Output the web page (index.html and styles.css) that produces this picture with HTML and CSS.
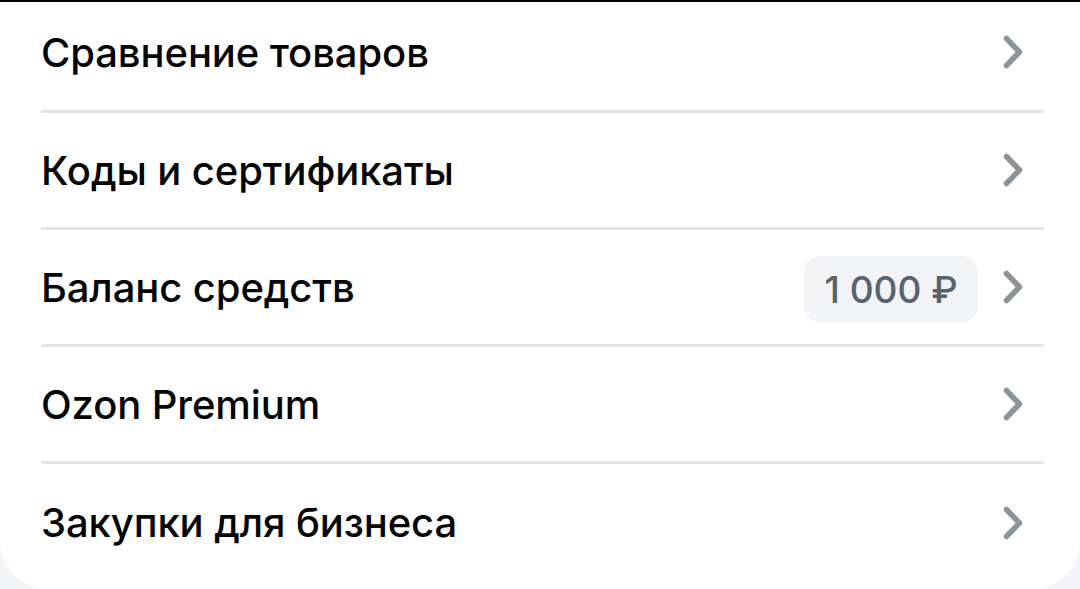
FILE: index.html
```html
<!DOCTYPE html>
<html lang="ru">
<head>
<meta charset="utf-8">
<link rel="stylesheet" href="styles.css">
</head>
<body>
<div class="page">
  <div class="topline"></div>
  <div class="card">
    <div class="row first">
      <span class="label">Сравнение товаров</span>
      <svg class="chev" viewBox="0 0 20 34" width="20" height="34"><path d="M3.5 3.5 L16.5 17 L3.5 30.5"/></svg>
    </div>
    <div class="row">
      <span class="label">Коды и сертификаты</span>
      <svg class="chev" viewBox="0 0 20 34" width="20" height="34"><path d="M3.5 3.5 L16.5 17 L3.5 30.5"/></svg>
    </div>
    <div class="row">
      <span class="label">Баланс средств</span>
      <span class="badge">1 000 ₽</span>
      <svg class="chev" viewBox="0 0 20 34" width="20" height="34"><path d="M3.5 3.5 L16.5 17 L3.5 30.5"/></svg>
    </div>
    <div class="row">
      <span class="label">Ozon Premium</span>
      <svg class="chev" viewBox="0 0 20 34" width="20" height="34"><path d="M3.5 3.5 L16.5 17 L3.5 30.5"/></svg>
    </div>
    <div class="row last">
      <span class="label">Закупки для бизнеса</span>
      <svg class="chev" viewBox="0 0 20 34" width="20" height="34"><path d="M3.5 3.5 L16.5 17 L3.5 30.5"/></svg>
    </div>
  </div>
</div>
</body>
</html>
```

FILE: styles.css
```css
html, body {
  margin: 0;
  padding: 0;
  height: 100%;
  overflow: hidden;
  background: #f3f4f7;
}

.page {
  width: 1080px;
  height: 589px;
  font-family: Inter, "Noto Sans", sans-serif;
}

.topline {
  height: 2px;
  background: #000;
}

.card {
  background: #fff;
  height: 588px;
  border-radius: 0 0 50px 50px;
  padding: 0 36px 0 41px;
  box-sizing: border-box;
}

.row {
  display: flex;
  align-items: center;
  height: 117px;
  box-sizing: border-box;
  border-bottom: 3px solid #e2e6eb;
}

.row.first {
  height: 111px;
  padding-bottom: 8px;
}

.row.last {
  border-bottom: none;
}

.label {
  flex: 1;
  font-size: 40px;
  font-weight: 500;
  color: #050505;
  letter-spacing: -0.1px;
}

.badge {
  display: flex;
  align-items: center;
  justify-content: center;
  width: 174px;
  height: 66px;
  margin-top: 4px;
  border-radius: 16px;
  background: #f1f3f6;
  color: #56636f;
  font-size: 37px;
  font-weight: 500;
  margin-right: 25px;
}

.chev {
  margin-right: 21px;
  margin-left: 0;
}

.chev path {
  fill: none;
  stroke: #8b939b;
  stroke-width: 5.5;
  stroke-linecap: round;
  stroke-linejoin: round;
}
```
